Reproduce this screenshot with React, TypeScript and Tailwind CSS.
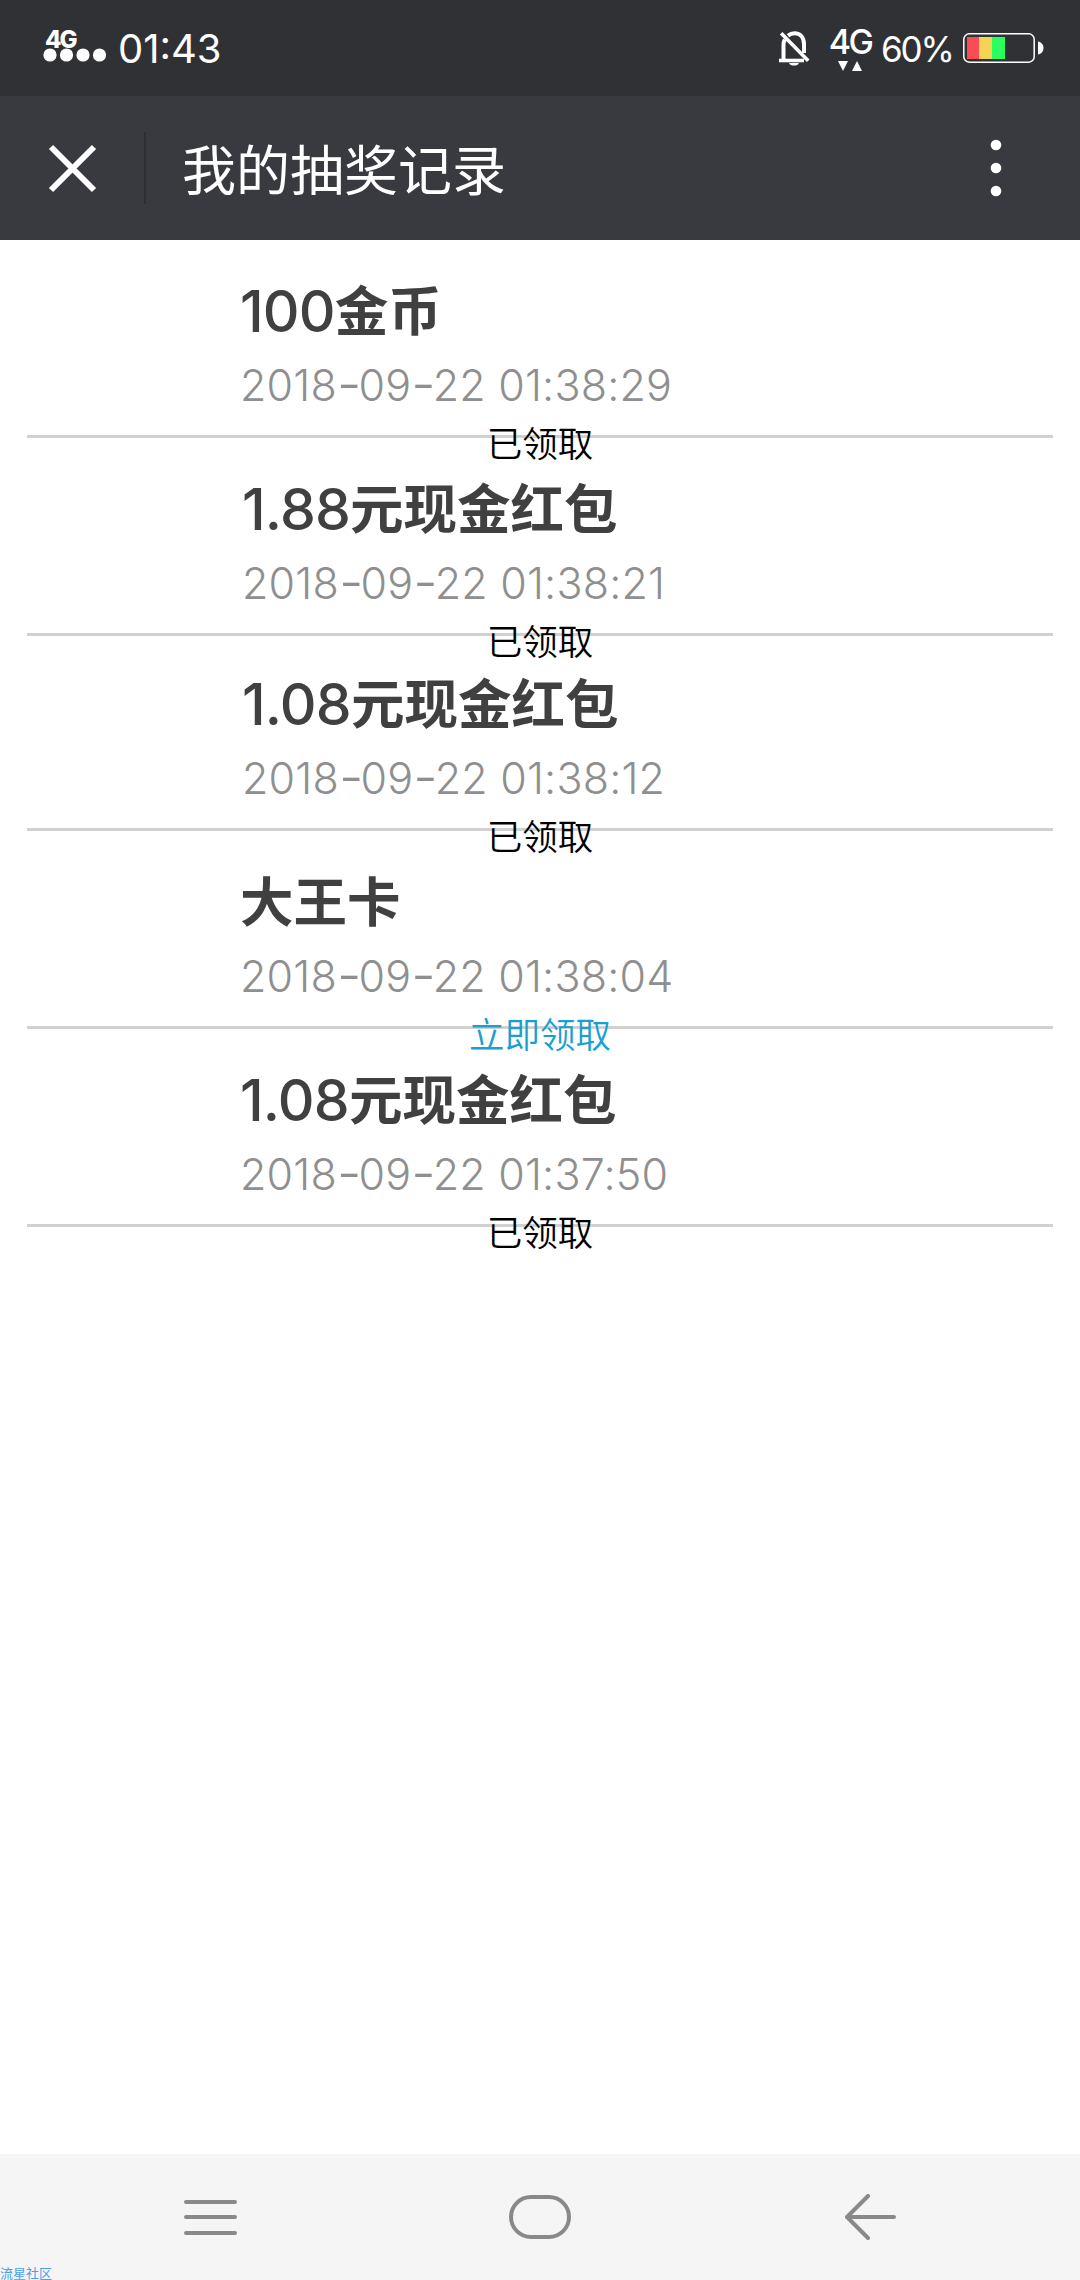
// LotteryRecords.tsx

import React from "react";

interface LotteryRecord {
  amount?: string;
  prize: string;
  time: string;
  claimed: boolean;
  rowClass: string;
}

const records: LotteryRecord[] = [
  { amount: "100", prize: "金币", time: "2018-09-22 01:38:29", claimed: true, rowClass: "h-[198px] pl-[213px]" },
  { amount: "1.88", prize: "元现金红包", time: "2018-09-22 01:38:21", claimed: true, rowClass: "h-[198px] pl-[215px]" },
  { amount: "1.08", prize: "元现金红包", time: "2018-09-22 01:38:12", claimed: true, rowClass: "h-[195px] pl-[215px]" },
  { prize: "大王卡", time: "2018-09-22 01:38:04", claimed: false, rowClass: "h-[198px] pl-[213px]" },
  { amount: "1.08", prize: "元现金红包", time: "2018-09-22 01:37:50", claimed: true, rowClass: "h-[198px] pl-[213px]" },
];

const SignalDots: React.FC = () => (
  <div className="flex w-[64px] flex-col">
    <span className="h-[18px] pl-[2px] text-[24px] leading-[19px] font-extrabold tracking-[-2px]">
      4G
    </span>
    <svg width="64" height="14" viewBox="0 0 64 14" fill="currentColor">
      <circle cx="7" cy="7" r="6.6" />
      <circle cx="23.5" cy="7" r="6.6" />
      <circle cx="40" cy="7" r="6.6" />
      <circle cx="56.5" cy="7" r="6.6" />
    </svg>
  </div>
);

const MutedBell: React.FC = () => (
  <svg width="32" height="36" viewBox="0 0 32 36" fill="none" stroke="currentColor">
    <path d="M4.500 29V14c0-2.200.5-4 1.300-5.500M9 4.600C11 3 13 2.200 15.500 2.200c6 0 9.500 4.500 9.500 11V22" strokeWidth="4" />
    <path d="M0 29.500h25" strokeWidth="3.600" />
    <path d="M2.200 2.200l27 27.500" strokeWidth="3.600" />
    <path d="M10 32h10c-.8 1.800-2.600 2.600-5 2.600s-4.200-.8-5-2.600z" fill="currentColor" stroke="none" />
  </svg>
);

const Battery: React.FC = () => (
  <svg width="82" height="30" viewBox="0 0 82 30">
    <rect x="0.800" y="0.800" width="70.400" height="28.400" rx="5.500" fill="none" stroke="#fff" strokeWidth="1.500" />
    <rect x="4" y="4" width="12" height="22" fill="#fb4c54" />
    <rect x="16" y="4" width="13" height="22" fill="#f3d455" />
    <rect x="29" y="4" width="13" height="22" fill="#2aff60" />
    <path d="M75 8.500c3 .5 5.500 3 5.500 6.500s-2.500 6-5.500 6.500z" fill="#fff" />
  </svg>
);

const StatusBar: React.FC = () => (
  <div className="flex h-24 items-start justify-between bg-[#303135] pr-[35px] pl-[43px] text-white">
    <div className="flex pt-[30px]">
      <SignalDots />
      <span className="ml-[11px] text-[40px] leading-[37px]">01:43</span>
    </div>
    <div className="flex items-start">
      <div className="pt-[31px]">
        <MutedBell />
      </div>
      <div className="ml-[16px] flex w-[46px] flex-col items-center pt-[26px]">
        <span className="text-[34px] leading-[32px] font-medium tracking-[-2.500px]">4G</span>
        <svg className="mt-[2px]" width="24" height="12" viewBox="0 0 24 12" fill="currentColor">
          <path d="M0 1h10L5 11z" />
          <path d="M14 11h10L19 1z" />
        </svg>
      </div>
      <span className="ml-[8px] w-[73px] pt-[31px] text-[35px] leading-[36px] tracking-[-2.200px] whitespace-nowrap">60%</span>
      <div className="ml-[9px] pt-[33px]">
        <Battery />
      </div>
    </div>
  </div>
);

const TitleBar: React.FC = () => (
  <header className="flex h-36 items-center bg-[#393a3f] text-white">
    <svg className="ml-[48px]" width="50" height="50" viewBox="0 0 50 50" stroke="currentColor" strokeWidth="6">
      <path d="M3 4l43 43M46 4L3 47" />
    </svg>
    <div className="ml-[46px] h-[72px] w-[2px] bg-[#2e2f33]" />
    <h1 className="ml-[36px] pt-[7px] text-[54px] leading-[72px]">我的抽奖记录</h1>
    <svg className="mr-[78px] ml-auto" width="12" height="58" viewBox="0 0 12 58" fill="currentColor">
      <circle cx="6" cy="6" r="5.300" />
      <circle cx="6" cy="29" r="5.300" />
      <circle cx="6" cy="52" r="5.300" />
    </svg>
  </header>
);

const RecordTime: React.FC<{ value: string }> = ({ value }) => (
  <time className="mt-[18px] mb-[25px] h-[50px] text-[43px] leading-[50px] font-light tracking-[0.2px] text-[#8f8f8f]">
    {value.split("-").map((part, i) => (
      <React.Fragment key={i}>
        {i > 0 && (
          <span className="align-[-5px] text-[54px] leading-[0] font-light tracking-[-3px] [font-feature-settings:'case']">-</span>
        )}
        {part}
      </React.Fragment>
    ))}
  </time>
);

const RecordRow: React.FC<{ record: LotteryRecord }> = ({ record }) => (
  <li className={`relative flex flex-col justify-end border-b-[3px] border-[#d1d1d1] ${record.rowClass}`}>
    <div className="flex h-[60px] items-center text-[#404040]">
      {record.amount && <span className="text-[57px] leading-[60px] font-[550] tracking-[-0.8px]">{record.amount}</span>}
      <span className="text-[53.500px] leading-[60px] font-semibold">{record.prize}</span>
    </div>
    <RecordTime value={record.time} />
    {/* the status label straddles the divider */}
    <div className="absolute inset-x-0 bottom-[-32px] text-center text-[35.500px] leading-[44px] font-[350]">
      {record.claimed ? (
        <span className="text-black">已领取</span>
      ) : (
        <a className="text-[#1b9fd0]">立即领取</a>
      )}
    </div>
  </li>
);

const NavBar: React.FC = () => (
  <nav className="relative flex h-[126px] items-center bg-[#f5f5f5] text-[#898989]">
    <svg className="ml-[184px]" width="53" height="36" viewBox="0 0 53 36" stroke="currentColor" strokeWidth="4" strokeLinecap="round">
      <path d="M2 3h49M2 18h49M2 34h49" />
    </svg>
    <svg className="ml-[272px]" width="62" height="44" viewBox="0 0 62 44" fill="none" stroke="currentColor" strokeWidth="4">
      <rect x="2" y="2" width="58" height="40" rx="20" />
    </svg>
    <svg className="ml-[274px]" width="51" height="46" viewBox="0 0 51 46" fill="none" stroke="currentColor" strokeWidth="4" strokeLinecap="round" strokeLinejoin="round">
      <path d="M23 2L2 23l21 21M2 23h47" />
    </svg>
    <span className="absolute bottom-0 left-0 text-[13px] leading-[13px] text-[#4a9fe6]">流星社区</span>
  </nav>
);

const App: React.FC = () => {
  return (
    <div className="flex h-[2280px] w-[1080px] flex-col overflow-hidden bg-white font-['Inter','Noto_Sans_CJK_SC',sans-serif]">
      <StatusBar />
      <TitleBar />
      <main className="flex-1 px-[27px]">
        <ul>
          {records.map((record) => (
            <RecordRow key={record.time} record={record} />
          ))}
        </ul>
      </main>
      <NavBar />
    </div>
  );
};

export default App;
